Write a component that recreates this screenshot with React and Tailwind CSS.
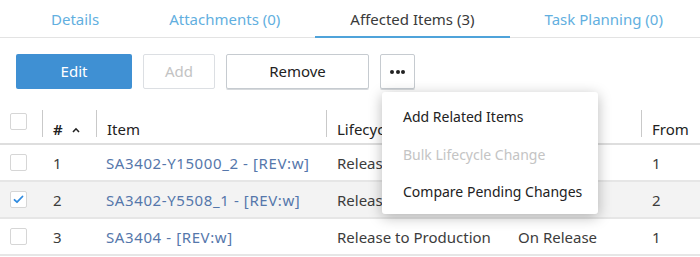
import React from 'react';

const tabs = [
  { label: 'Details', active: false },
  { label: 'Attachments (0)', active: false },
  { label: 'Affected Items (3)', active: true },
  { label: 'Task Planning (0)', active: false },
];

const rows = [
  { n: 1, item: 'SA3402-Y15000_2 - [REV:w]', lifecycle: 'Release to Production', effect: 'On Release', from: '1', checked: false },
  { n: 2, item: 'SA3402-Y5508_1 - [REV:w]', lifecycle: 'Release to Production', effect: 'On Release', from: '2', checked: true },
  { n: 3, item: 'SA3404 - [REV:w]', lifecycle: 'Release to Production', effect: 'On Release', from: '1', checked: false },
];

const cols = 'grid grid-cols-[42px_54px_230px_182px_133px_1fr]';

const Checkbox = ({ checked }) => (
  <div className="w-[17px] h-[17px] rounded-[2px] border border-[#d6d6d6] bg-white flex items-center justify-center">
    {checked && (
      <svg width="11" height="9" viewBox="0 0 11 9" fill="none">
        <path d="M1.5 4.8L4 7.2L9.5 1.5" stroke="#2f8be0" strokeWidth="1.8" strokeLinecap="round" strokeLinejoin="round" />
      </svg>
    )}
  </div>
);

const HeaderCell = ({ children, sep = true }) => (
  <div className="relative flex items-end pl-[11px] pb-[3px] text-[15px] text-[#222]">
    {sep && <span className="absolute left-0 top-[10px] h-[27px] w-px bg-[#c9c9c9]" />}
    {children}
  </div>
);

const App = () => {
  return (
    <div className="w-[700px] h-[257px] overflow-hidden bg-white relative" style={{ fontFamily: '"Noto Sans", "Open Sans", sans-serif' }}>
      {/* Tabs */}
      <div className="flex pl-4 h-[38px] border-b border-[#e3e3e3]">
        {tabs.map((t) => (
          <div
            key={t.label}
            className={`px-[35px] flex items-center pt-[2px] text-[15px] ${t.active ? 'text-[#3a3a3a] border-b-2 border-[#4fa3da] -mb-px' : 'text-[#62afe0]'}`}
          >
            {t.label}
          </div>
        ))}
      </div>

      {/* Toolbar */}
      <div className="relative flex gap-[11px] pl-4 mt-4 h-[35px] text-[15px]">
        <button className="w-[116px] rounded-[2px] bg-[#3f90d3] text-white">Edit</button>
        <button className="w-[72px] rounded-[2px] border border-[#dcdfe3] text-[#c3c3c3]">Add</button>
        <button className="w-[143px] rounded-[2px] border border-[#c6cbd0] text-[#222] shadow-[0_1px_0_#d6d9dc]">Remove</button>
        <button className="w-[35px] rounded-[2px] border border-[#c6cbd0] shadow-[0_1px_0_#d6d9dc] flex items-center justify-center gap-[1.5px]">
          <span className="w-[4px] h-[4px] rounded-full bg-[#222]" />
          <span className="w-[4px] h-[4px] rounded-full bg-[#222]" />
          <span className="w-[4px] h-[4px] rounded-full bg-[#222]" />
        </button>

        {/* Dropdown menu */}
        <div className="absolute left-[382px] top-[38px] z-10 w-[216px] h-[122px] bg-white rounded-[3px] shadow-[0_3px_14px_rgba(0,0,0,0.28)] pt-[6px] text-[14px]">
          <div className="h-[37.5px] flex items-center pl-[21px] text-[#222]">Add Related Items</div>
          <div className="h-[37.5px] flex items-center pl-[21px] text-[#c4c4c4]">Bulk Lifecycle Change</div>
          <div className="h-[37.5px] flex items-center pl-[21px] text-[#222]">Compare Pending Changes</div>
        </div>
      </div>

      {/* Table */}
      <div className="mt-[11px]">
        <div className={`${cols} h-[45px] border-b-2 border-[#dedede]`}>
          <div className="flex items-start pt-[13px] pl-[10px]">
            <Checkbox />
          </div>
          <HeaderCell>
            <span className="font-semibold">#</span>
            <svg className="ml-[9px] mb-[7px]" width="8" height="6" viewBox="0 0 8 6" fill="none">
              <path d="M1 5L4 1.8L7 5" stroke="#222" strokeWidth="1.6" />
            </svg>
          </HeaderCell>
          <HeaderCell>Item</HeaderCell>
          <HeaderCell>Lifecycle</HeaderCell>
          <HeaderCell>Effectivity</HeaderCell>
          <HeaderCell>From</HeaderCell>
        </div>
        {rows.map((r) => (
          <div
            key={r.n}
            className={`${cols} h-[37px] items-center pt-[2px] border-b-2 border-[#e6e6e6] text-[15px] text-[#3c3c3c] ${r.checked ? 'bg-[#f3f3f3]' : 'bg-white'}`}
          >
            <div className="pl-[10px] -mt-[2px]">
              <Checkbox checked={r.checked} />
            </div>
            <div className="pl-[11px]">{r.n}</div>
            <div className="pl-[10px] text-[#5577ab] tracking-[0.6px] whitespace-nowrap">{r.item}</div>
            <div className="pl-[11px] whitespace-nowrap">{r.lifecycle}</div>
            <div className="pl-[10px] whitespace-nowrap">{r.effect}</div>
            <div className="pl-[11px]">{r.from}</div>
          </div>
        ))}
      </div>
    </div>
  );
};

export default App;
